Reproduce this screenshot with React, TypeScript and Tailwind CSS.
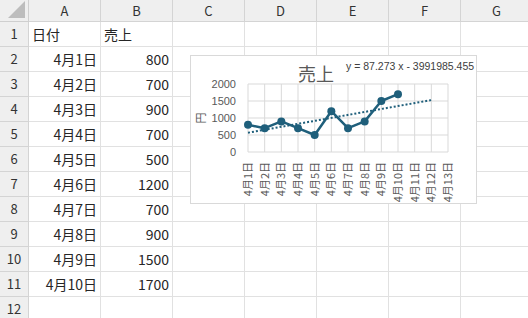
import React from "react";

const cols = ["A", "B", "C", "D", "E", "F", "G"];
const data: [string, number][] = [
  ["4月1日", 800],
  ["4月2日", 700],
  ["4月3日", 900],
  ["4月4日", 700],
  ["4月5日", 500],
  ["4月6日", 1200],
  ["4月7日", 700],
  ["4月8日", 900],
  ["4月9日", 1500],
  ["4月10日", 1700],
];

const font = '"Noto Sans CJK JP", "Noto Sans", sans-serif';

function Chart() {
  const L = 57, T = 28, W = 200, H = 68;
  const step = W / 12;
  const y = (v: number) => T + H - (v / 2000) * H;
  const cats = Array.from({ length: 13 }, (_, i) => `4月${i + 1}日`);
  const pts = data.map(([, v], i) => `${L + i * step},${y(v)}`).join(" ");
  const t1 = 960 - 4.5 * 87.273;
  const t12 = 960 + 6.5 * 87.273;
  return (
    <div className="absolute left-[190px] top-[55px] w-[287px] h-[149px] bg-white border border-[#d9d9d9]">
      <svg width={287} height={149} style={{ fontFamily: font }} className="block">
        <text x={125} y={25} fontSize={18} fill="#595959" textAnchor="middle">売上</text>
        <text x={155} y={14} fontSize={10.5} fill="#404040" style={{ fontFamily: '"Liberation Sans", sans-serif' }}>y = 87.273 x - 3991985.455</text>
        {[0, 500, 1000, 1500, 2000].map((v) => (
          <g key={v}>
            <line x1={L} x2={L + W} y1={y(v)} y2={y(v)} stroke="#d9d9d9" strokeWidth={1} />
            <text x={45} y={y(v) + 4} fontSize={11} fill="#595959" textAnchor="end" style={{ fontFamily: '"Liberation Sans", sans-serif' }}>{v}</text>
          </g>
        ))}
        {cats.map((c, i) => (
          <g key={c}>
            <line x1={L + i * step} x2={L + i * step} y1={T} y2={T + H} stroke="#d9d9d9" strokeWidth={1} />
            <text
              x={0}
              y={0}
              fontSize={11}
              fill="#595959"
              textAnchor="end"
              transform={`translate(${L + i * step + 4},${106}) rotate(-90)`}
            >
              {c}
            </text>
          </g>
        ))}
        <text x={0} y={0} fontSize={11} fill="#595959" textAnchor="middle" transform="translate(14,62) rotate(-90)">円</text>
        <line x1={L} y1={y(t1)} x2={L + 11 * step} y2={y(t12)} stroke="#1f5f7b" strokeWidth={2} strokeDasharray="2 2" />
        <polyline points={pts} fill="none" stroke="#1f5f7b" strokeWidth={2.5} strokeLinejoin="round" />
        {data.map(([, v], i) => (
          <circle key={i} cx={L + i * step} cy={y(v)} r={4} fill="#1f5f7b" />
        ))}
      </svg>
    </div>
  );
}

export default function App() {
  const rows = Array.from({ length: 12 }, (_, i) => i + 1);
  const cell = (r: number, c: number) => {
    if (r === 1 && c === 0) return { t: "日付", right: false };
    if (r === 1 && c === 1) return { t: "売上", right: false };
    if (r >= 2 && r <= 11) {
      const d = data[r - 2];
      if (c === 0) return { t: d[0], right: true };
      if (c === 1) return { t: String(d[1]), right: true };
    }
    return null;
  };
  return (
    <div className="relative w-[528px] h-[318px] overflow-hidden bg-white text-[#262626]" style={{ fontFamily: font }}>
      <div className="grid grid-cols-[29px_repeat(7,72px)] grid-rows-[22px_repeat(12,25px)]">
        <div className="relative bg-[#efefef] border-r border-b border-[#cfcfcf]">
          <div className="absolute right-[3px] bottom-[3px] w-0 h-0 border-l-[17px] border-l-transparent border-b-[17px] border-b-[#bdbdbd]" />
        </div>
        {cols.map((c) => (
          <div key={c} className="bg-[#efefef] border-r border-b border-[#d4d4d4] flex items-center justify-center text-[13px] text-[#333]">
            {c}
          </div>
        ))}
        {rows.map((r) => (
          <React.Fragment key={r}>
            <div className="bg-[#efefef] border-r border-b border-[#d4d4d4] flex items-center justify-center text-[13px] text-[#333]">
              {r}
            </div>
            {cols.map((c, ci) => {
              const v = cell(r, ci);
              return (
                <div
                  key={c}
                  className={`border-r border-b border-[#e1e1e1] flex items-center text-[14px] px-[3px] ${v && v.right ? "justify-end" : "justify-start"}`}
                >
                  {v ? v.t : ""}
                </div>
              );
            })}
          </React.Fragment>
        ))}
      </div>
      <Chart />
    </div>
  );
}
